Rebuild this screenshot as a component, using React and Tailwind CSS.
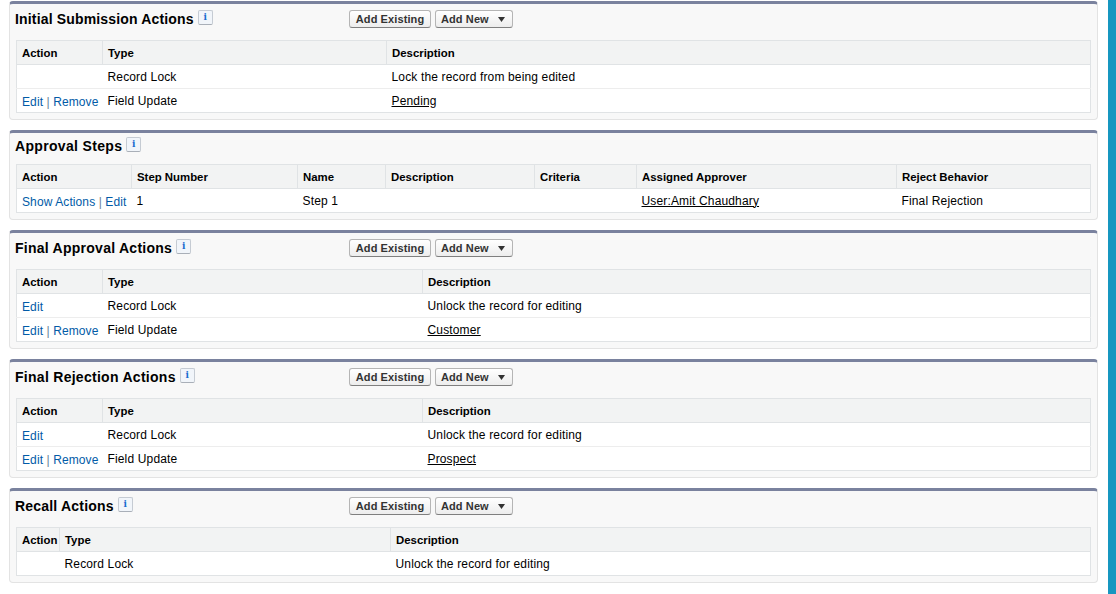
const linkClass = "inline-block pt-[2px] tracking-[0.1px] text-[#015ba7]";

function InfoIcon() {
  return (
    <span className="ml-[4px] flex h-[15px] w-[15px] items-center justify-center rounded-[2px] border border-[#c5cbd3] border-b-[#a9afb8] bg-[#f1f5fa] font-['DejaVu_Serif',serif] text-[9px] font-bold leading-none text-[#1a6ccf]">
      i
    </span>
  );
}

function Buttons() {
  return (
    <div className="flex gap-[4px]">
      <button className="h-[18px] w-[82px] rounded-[3px] border border-[#b5b5b5] border-b-[#7f7f7f] bg-gradient-to-b from-[#ffffff] to-[#ededed] text-[11px] font-bold leading-none tracking-[0.1px] text-[#333333]">
        Add Existing
      </button>
      <button className="flex h-[18px] w-[78px] items-center rounded-[3px] border border-[#b5b5b5] border-b-[#7f7f7f] bg-gradient-to-b from-[#ffffff] to-[#ededed] pl-[5px] text-[11px] font-bold leading-none tracking-[0.1px] text-[#333333]">
        Add New
        <svg className="ml-[9px]" width="7" height="5" viewBox="0 0 7 5">
          <path d="M0 0h7L3.5 5z" fill="#333333" />
        </svg>
      </button>
    </div>
  );
}

function Section({ title, titleTracking, actions, headTop, headHeight, widths, headers, rows, height }) {
  return (
    <section className={`${height} rounded-[4px] border border-t-[3px] border-[#e3e3e3] border-t-[#7a829e] bg-[#f8f8f8] pr-[6px] pl-[6px]`}>
      <div className={`flex ${headHeight} ${headTop}`}>
        <div className="-ml-[1px] flex w-[334px] items-start">
          <h3 className={`text-[14px] leading-[18px] font-bold ${titleTracking} text-black`}>{title}</h3>
          <InfoIcon />
        </div>
        {actions && <Buttons />}
      </div>
      <table className="w-full table-fixed border border-[#e0e3e5] bg-white text-[12px] leading-[14px] tracking-[0.15px] text-black">
        <colgroup>
          {widths.map((w, i) => (
            <col key={i} style={{ width: w }} />
          ))}
        </colgroup>
        <thead>
          <tr className="h-[24px] bg-[#f2f3f3]">
            {headers.map((h, i) => (
              <th key={i} className="border-b border-l border-[#e0e3e5] pl-[5px] text-left text-[11.4px] font-bold tracking-normal first:border-l-0">
                {h}
              </th>
            ))}
          </tr>
        </thead>
        <tbody>
          {rows.map((row, r) => (
            <tr key={r} className="h-[24px] border-b border-[#ededed] last:border-b-0">
              {row.map((cell, i) => (
                <td key={i} className="truncate pl-[5px]">
                  {cell}
                </td>
              ))}
            </tr>
          ))}
        </tbody>
      </table>
    </section>
  );
}

function EditRemove() {
  return (
    <span className={linkClass}>
      Edit <span className="text-[#6a7f99]">|</span> Remove
    </span>
  );
}

const Edit = <span className={linkClass}>Edit</span>;
const ActionHeaders = ["Action", "Type", "Description"];
const u = (text) => <span className="underline">{text}</span>;

export default function App() {
  return (
    <div className="flex h-[594px] w-[1116px] overflow-hidden bg-white font-['Liberation_Sans',Arial,sans-serif]">
      <div className="ml-[9px] flex w-[1089px] flex-col gap-[10px] pt-[1px]">
        <Section
          title="Initial Submission Actions"
          titleTracking="tracking-[0.16px]"
          actions
          headTop="pt-[6px]"
          headHeight="h-[36px]"
          height="h-[119px]"
          widths={[86, 284, "auto"]}
          headers={ActionHeaders}
          rows={[
            ["", "Record Lock", "Lock the record from being edited"],
            [<EditRemove />, "Field Update", u("Pending")],
          ]}
        />
        <Section
          title="Approval Steps"
          titleTracking="tracking-[0.33px]"
          headTop="pt-[4px]"
          headHeight="h-[31px]"
          height="h-[90px]"
          widths={[115, 166, 88, 149, 102, 260, "auto"]}
          headers={["Action", "Step Number", "Name", "Description", "Criteria", "Assigned Approver", "Reject Behavior"]}
          rows={[
            [
              <span className={linkClass}>
                Show Actions <span className="text-[#6a7f99]">|</span> Edit
              </span>,
              "1",
              "Step 1",
              "",
              "",
              u("User:Amit Chaudhary"),
              "Final Rejection",
            ],
          ]}
        />
        <Section
          title="Final Approval Actions"
          titleTracking="tracking-[0.26px]"
          actions
          headTop="pt-[6px]"
          headHeight="h-[36px]"
          height="h-[119px]"
          widths={[86, 320, "auto"]}
          headers={ActionHeaders}
          rows={[
            [Edit, "Record Lock", "Unlock the record for editing"],
            [<EditRemove />, "Field Update", u("Customer")],
          ]}
        />
        <Section
          title="Final Rejection Actions"
          titleTracking="tracking-[0.28px]"
          actions
          headTop="pt-[6px]"
          headHeight="h-[36px]"
          height="h-[119px]"
          widths={[86, 320, "auto"]}
          headers={ActionHeaders}
          rows={[
            [Edit, "Record Lock", "Unlock the record for editing"],
            [<EditRemove />, "Field Update", u("Prospect")],
          ]}
        />
        <Section
          title="Recall Actions"
          titleTracking="tracking-[0.2px]"
          actions
          headTop="pt-[6px]"
          headHeight="h-[36px]"
          height="h-[95px]"
          widths={[43, 331, "auto"]}
          headers={ActionHeaders}
          rows={[["", "Record Lock", "Unlock the record for editing"]]}
        />
      </div>
      <div className="ml-[10px] h-full w-[8px] bg-[#1797c0]" />
    </div>
  );
}
